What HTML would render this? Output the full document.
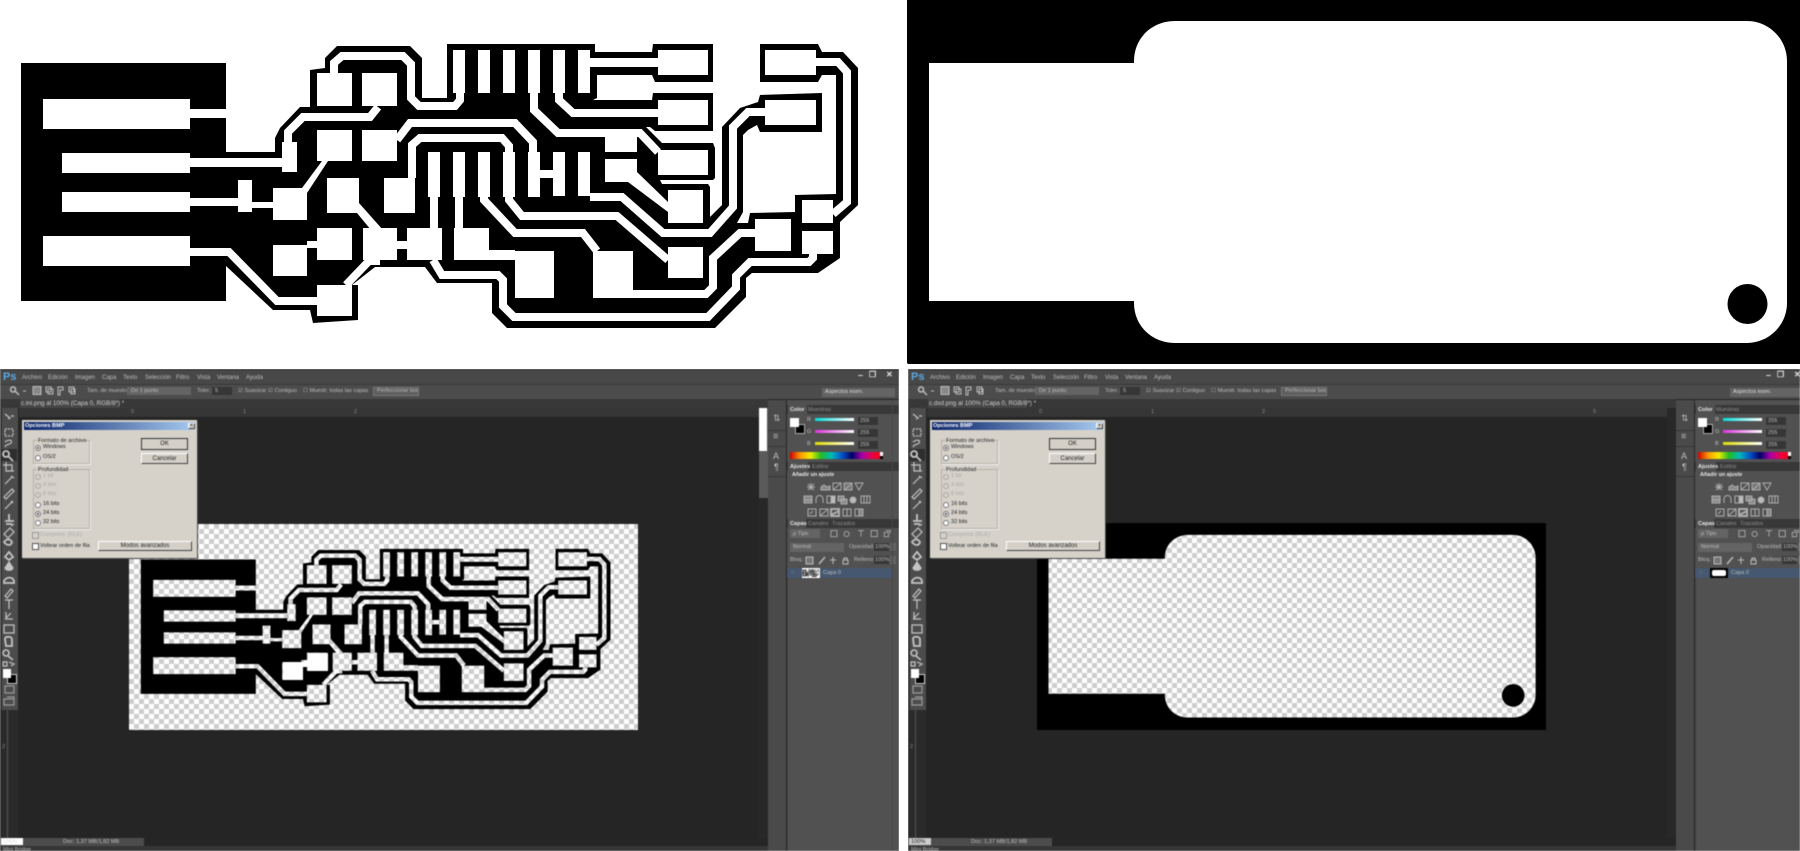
<!DOCTYPE html>
<html><head><meta charset="utf-8"><title>PCB</title>
<style>
html,body{margin:0;padding:0;background:#fff;width:1800px;height:851px;overflow:hidden}
body{position:relative;font-family:"Liberation Sans",sans-serif}
svg{display:block}
.p{position:absolute;top:0;height:851px;overflow:hidden;filter:blur(.6px);clip-path:inset(369px 0 0 0)}
.p div,.p span,.p svg{position:absolute}
.t{font-size:5.6px;line-height:8px;color:#bdbdbd;white-space:nowrap}
.m{font-size:6px}
.d{color:#222;font-size:5.6px}
.g{color:#8f8f8f}
.b{color:#e6e6e6;font-weight:bold}
.bx{background:#363636}
.cmb{background:#646464;height:8px}
.rad{width:4px;height:4px;border-radius:50%;background:#fff;border:1px solid #777;box-sizing:content-box}
.rad.on{background:#333;box-shadow:inset 0 0 0 1px #fff}
.rad.off{background:#d4d0c8;border-color:#aaa}
.chk{width:5px;height:5px;background:#fff;border:1px solid #555}
.grp{border:1px solid #b5b1a9;box-shadow:1px 1px 0 #eee}
.btn{background:#d4d0c8;border:1px solid #fff;border-right:1px solid #444;border-bottom:1px solid #444;text-align:center;color:#222;font-size:6px;line-height:10px;box-sizing:border-box}
.chec{background:repeating-conic-gradient(#cdcdcd 0 25%,#fff 0 50%) 0 0/10px 10px;mix-blend-mode:multiply}
.s{height:3px;width:39px}
</style></head><body>

<svg width="0" height="0" style="position:absolute">
<defs>
<symbol id="pcb" viewBox="0 0 907 365" preserveAspectRatio="none">
<rect width="907" height="365" fill="#fff"/>
<polygon fill="#000" points="21,63 226,63 226,152 275,152 275,138 280,128 300,107 310,107 310,70 325,68 325,58 337,46 410,46 422,58 422,98 447,98 447,44 595,44 595,52 652,52 653,44 713,44 713,82 655,82 652,75 597,75 597,98 593,100 652,100 653,93 713,93 713,131 655,131 650,127 646,127 662,143 713,143 715,148 715,178 713,180 660,180 662,184 708,184 710,187 710,217 722,205 722,127 740,108 758,102 760,95 822,93 822,132 760,132 757,125 748,130 743,135 743,212 737,223 748,223 750,213 795,212 795,195 836,194 836,75 822,75 818,82 760,82 760,44 818,44 822,52 843,52 858,68 858,205 840,222 840,258 818,273 752,273 746,278 746,297 715,328 507,328 492,313 492,283 437,283 425,267 375,267 352,285 358,285 358,320 313,323 310,310 273,310 226,266 226,301 21,301"/>
<g fill="#fff">
<rect x="43" y="99" width="147" height="30"/><rect x="62" y="153" width="128" height="20"/><rect x="62" y="192" width="128" height="20"/><rect x="43" y="236" width="147" height="30"/>
<rect x="190" y="109" width="36" height="9"/><rect x="190" y="158" width="92" height="9"/><rect x="190" y="198" width="48" height="8"/><rect x="252" y="202" width="21" height="6"/><rect x="238" y="180" width="14" height="32"/>
<rect x="282" y="142" width="15" height="30"/>
<rect x="317" y="73" width="35" height="33"/><rect x="362" y="73" width="35" height="33"/><rect x="317" y="130" width="35" height="31"/><rect x="362" y="130" width="35" height="31"/>
<rect x="327" y="178" width="32" height="35"/><rect x="384" y="178" width="31" height="35"/><rect x="273" y="188" width="34" height="32"/><rect x="273" y="245" width="34" height="31"/>
<rect x="317" y="228" width="35" height="32"/><rect x="317" y="285" width="35" height="31"/><rect x="363" y="228" width="34" height="32"/><rect x="407" y="228" width="35" height="32"/><rect x="454" y="228" width="35" height="32"/>
<rect x="515" y="251" width="39" height="47"/><rect x="593" y="251" width="40" height="47"/><rect x="489" y="250" width="26" height="10"/>
<rect x="605" y="137" width="32" height="15"/><rect x="605" y="159" width="32" height="23"/><rect x="668" y="190" width="35" height="33"/><rect x="668" y="247" width="35" height="31"/>
<rect x="658" y="50" width="50" height="25"/><rect x="658" y="100" width="50" height="25"/><rect x="658" y="150" width="50" height="25"/>
<rect x="765" y="50" width="51" height="25"/><rect x="765" y="100" width="51" height="25"/>
<rect x="755" y="219" width="36" height="32"/><rect x="802" y="200" width="31" height="23"/><rect x="802" y="231" width="31" height="23"/>
<rect x="453" y="50" width="12" height="43"/><rect x="478" y="50" width="12" height="43"/><rect x="503" y="50" width="12" height="43"/><rect x="528" y="50" width="12" height="43"/><rect x="553" y="50" width="12" height="43"/><rect x="578" y="50" width="12" height="43"/>
<rect x="428" y="152" width="12" height="45"/><rect x="453" y="152" width="12" height="45"/><rect x="478" y="152" width="12" height="45"/><rect x="503" y="152" width="12" height="45"/><rect x="528" y="152" width="12" height="45"/><rect x="553" y="152" width="12" height="44"/><rect x="578" y="152" width="12" height="44"/>
<rect x="540" y="170" width="13" height="8"/><rect x="590" y="58" width="68" height="9"/><rect x="397" y="241" width="10" height="8"/><rect x="307" y="241" width="10" height="7"/>
<polygon points="302,188 322,161 328,161 307,193"/><polygon points="357,213 359,203 383,230 371,230"/><polygon points="637,172 668,202 668,212 628,182"/>
</g>
<g fill="none" stroke="#fff" stroke-width="8">
<path d="M190 252H229L277 301H317"/>
<path d="M334 73V63L342 56H403L411 64V98L419 106H455L460 100V93"/>
<path d="M288 142V132L303 117H370L378 107"/>
<path d="M397 140L410 123H515L533 142V152"/>
<path d="M412 178V145L420 138H502L509 146V152"/>
<path d="M434 197V230M459 197V230"/>
<path d="M484 197V200L515 233H583L597 251"/>
<path d="M509 197V200L522 216H617L668 260"/>
<path d="M590 197H622L663 233H710L733 207V127L748 112H765"/>
<path d="M559 93V100L573 113H658"/>
<path d="M534 93V110L558 133H640L658 152"/>
<path d="M816 62H838L847 72V202L833 214"/>
<path d="M813 254V258L809 262H750L736 276V288L708 317H514L503 306V280L498 275H442L433 260"/>
<path d="M755 233H740L713 258V287L706 294H633"/>
<path d="M346 285L369 261H380"/>
</g>
</symbol>
<symbol id="case" viewBox="0 0 893 365" preserveAspectRatio="none">
<rect width="893" height="365" fill="#000"/>
<path fill="#fff" d="M22 63H227V61C227 38 245 21 268 21H840C862 21 880 39 880 61V303C880 325 862 343 840 343H268C245 343 227 326 227 303V301H22Z"/>
<circle cx="840.500" cy="304" r="20" fill="#000"/>
</symbol>
<symbol id="tools" viewBox="0 0 18 302">
<g fill="none" stroke="#c4c4c4" stroke-width="1.200">
<path d="M5 6l5 4-2 1M11 8h3"/>
<path d="M5 21h8v7H5z" stroke-dasharray="2 1"/>
<path d="M5 34c4-3 8-2 6 1-2 2-5 1-6 4"/>
<path d="M6 43a3 3 0 1 0 .1 0M8 48l5 5" stroke-width="1.800"/>
<path d="M6 54v9h8M3 57h9v6" />
<path d="M5 76l7-7M11 68l3 2"/>
<path d="M4 89l8-8 2 2-8 8z"/>
<path d="M5 101l8-8M11 93l2 2"/>
<path d="M5 113h9M9 106v7M6 116h6" stroke-width="1.800"/>
<path d="M4 126l6-6 4 4-6 6zM11 118l3-2"/>
<path d="M4 134c3-4 6-3 8 0-1 4-5 4-8 0z" stroke-width="1.800"/>
<path d="M5 149l4-5 4 5-4 3z" stroke-width="1.800"/>
<path d="M9 154l4 6c-1 3-7 3-8 0z" fill="#c4c4c4"/>
<path d="M4 173c3-5 9-4 10 0v2H4z" stroke-width="1.800"/>
<path d="M5 188l6-7 2 2-6 7z"/>
<path d="M5 192h8M9 192v9"/>
<path d="M5 211l6-6M6 204v7h7"/>
<path d="M4 217h10v8H4z"/>
<path d="M5 231c0-3 6-3 7 0v7H6z" stroke-width="1.800"/>
<path d="M6 242a3 3 0 1 0 .1 0M8 248l5 4" stroke-width="1.500"/>
<path d="M3 254h4v4H3zM9 254l5 2-3 2"/>
<path d="M5 278h9v7H5z" stroke="#999"/>
<path d="M4 291h10v6H4zM7 289h7v6" stroke="#999"/>
</g>
</symbol>
<symbol id="adj" viewBox="0 0 75 48">
<g fill="none" stroke="#aeaeae" stroke-width="1">
<path d="M8 2v7M4 6h8M5 3l6 6M11 3l-6 6"/><path d="M18 9V6l3-2 3 2 3-1v4z" fill="#888"/><path d="M30 2h8v7h-8zM30 9l8-7"/><path d="M41 2h8v7h-8zM41 9l4-3 4-4" fill="#777"/><path d="M52 2h8l-4 7z"/>
<path d="M1 15h8v7H1zM1 19h8" fill="#888"/><path d="M13 22v-4a3 3 0 0 1 7 0v4"/><path d="M24 15h8v7h-8z"/><path d="M28 15v7h4v-7z" fill="#bbb"/><path d="M35 15h6v5h-6zM38 18h6v5h-6z" fill="#888"/><path d="M47 19a3 3 0 1 0 6 0 3 3 0 1 0-6 0z" fill="#bbb"/><path d="M58 15h9v7h-9zM61 15v7M64 15v7"/>
<path d="M5 28h8v7H5zM7 33l3-3"/><path d="M17 28h8v7h-8zM17 35l8-7"/><path d="M28 28h8v7h-8zM28 34l8-4" stroke-width="2"/><path d="M40 28h8v7h-8zM44 28v7"/><path d="M52 28h8v7h-8z"/><path d="M56 28h4v7h-4z" fill="#888"/>
</g>
</symbol>
<symbol id="opt" viewBox="0 0 80 12">
<g fill="none" stroke="#bbb">
<path d="M13 2a2.500 2.500 0 1 0 .1 0M15 6l4 4" stroke-width="1.500"/><path d="M23 6h3"/>
<rect x="33" y="1.500" width="8" height="8" fill="#888"/><path d="M46 2h5v5h-5zM48 4h5v5h-5z"/><path d="M58 2h5v3h-3v5h-2z"/><path d="M69 2h5v5h-5zM71 4h4v5h-4z"/>
</g>
</symbol>
<symbol id="lay" viewBox="0 0 80 10">
<g fill="none" stroke="#aeaeae">
<path d="M1 1h7v7H1z"/><path d="M16 5a3 3 0 1 0 6 0a3 3 0 1 0-6 0"/><path d="M32 1h7M35.500 1v7"/><path d="M47 1h7v7h-7z"/><path d="M62 3h5v5h-5zM64 1h5v3"/>
</g>
</symbol>
<symbol id="lock" viewBox="0 0 45 10">
<g fill="none" stroke="#bbb">
<path d="M1 2h7v7H1z" fill="#777"/><path d="M14 9l6-7" stroke-width="1.500"/><path d="M28 2v7M25 5h6"/><path d="M38 5h5v4h-5zM39 5V3h3v2"/>
</g>
</symbol>
</defs>
</svg>

<!-- top left -->
<svg style="position:absolute;left:0;top:0" width="907" height="365"><use href="#pcb" width="907" height="365"/></svg>

<!-- top right -->
<div style="position:absolute;left:907px;top:0;width:893px;height:364px;background:#000;border-left:1px solid #888;box-sizing:border-box"></div>
<svg style="position:absolute;left:907px;top:0" width="893" height="363"><use href="#case" width="893" height="365"/></svg>

<!-- bottom left panel -->
<div class="p" style="left:0;width:899px">
<div style="left:0;top:369px;width:899px;height:482px;background:#252525"></div>
<div style="left:0;top:370px;width:899px;height:14px;background:#484848"></div>
<div style="left:0;top:384px;width:899px;height:15px;background:#4c4c4c;border-top:1px solid #393939;box-sizing:border-box"></div>
<span class="t" style="left:3px;top:372px;color:#5aa9e0;font-size:11px;font-weight:bold;line-height:11px">Ps</span>
<span class="t m" style="left:22px;top:374px">Archivo</span><span class="t m" style="left:48px;top:374px">Edición</span><span class="t m" style="left:75px;top:374px">Imagen</span><span class="t m" style="left:102px;top:374px">Capa</span><span class="t m" style="left:123px;top:374px">Texto</span><span class="t m" style="left:145px;top:374px">Selección</span><span class="t m" style="left:176px;top:374px">Filtro</span><span class="t m" style="left:197px;top:374px">Vista</span><span class="t m" style="left:217px;top:374px">Ventana</span><span class="t m" style="left:246px;top:374px">Ayuda</span>
<span class="t b" style="left:858px;top:371px;font-size:9px">–</span><span class="t b" style="left:869px;top:371px;font-size:8px">❐</span><span class="t b" style="left:886px;top:371px;font-size:8px">✕</span>
<svg style="left:0;top:385px" width="80" height="12"><use href="#opt"/></svg>
<span class="t" style="left:87px;top:387px">Tam. de muestra:</span><div class="cmb" style="left:127px;top:387px;width:64px"></div><span class="t" style="left:131px;top:387px">De 1 punto</span>
<span class="t" style="left:197px;top:387px">Toler.:</span><div class="bx" style="left:212px;top:387px;width:20px;height:8px"></div><span class="t" style="left:215px;top:387px">5</span>
<span class="t" style="left:238px;top:387px">☑ Suavizar</span><span class="t" style="left:268px;top:387px">☑ Contiguo</span><span class="t" style="left:303px;top:387px">☐ Muestr. todas las capas</span>
<div style="left:373px;top:387px;width:46px;height:9px;background:#5e5e5e;border:1px solid #777;box-sizing:border-box"></div><span class="t" style="left:377px;top:387px">Perfeccionar bor.</span>
<div class="cmb" style="left:822px;top:388px;width:73px;height:9px"></div><span class="t" style="left:825px;top:388px;color:#ddd">Aspectos esen.</span>

<div style="left:0;top:399px;width:768px;height:9px;background:#383838"></div>
<div style="left:20px;top:399px;width:99px;height:9px;background:#464646"></div>
<span class="t" style="left:21px;top:400px;color:#d0d0d0;font-size:6.300px">c.ini.png al 100% (Capa 0, RGB/8*) *</span>
<div style="left:19px;top:408px;width:740px;height:9px;background:#363636"></div>
<span class="t" style="left:131px;top:408px;color:#888">0</span><span class="t" style="left:243px;top:408px;color:#888">1</span><span class="t" style="left:354px;top:408px;color:#888">2</span>

<div style="left:2px;top:408px;width:16px;height:302px;background:#4c4c4c"></div><div style="left:0;top:408px;width:2px;height:302px;background:#333"></div>
<div style="left:2px;top:449px;width:15px;height:12px;background:#2e2e2e"></div>
<svg style="left:0;top:408px" width="18" height="302"><use href="#tools" width="18" height="302"/></svg>
<div style="left:7px;top:674px;width:8px;height:8px;background:#000;border:1px solid #ccc"></div>
<div style="left:3px;top:669px;width:8px;height:9px;background:#fff"></div>
<div style="left:0;top:710px;width:18px;height:128px;background:#2a2a2a"></div><div style="left:7px;top:710px;width:1px;height:128px;background:#555"></div>
<span class="t" style="left:2px;top:743px;color:#888">2</span>

<div style="left:759px;top:408px;width:9px;height:90px;background:#5a5a5a"></div>
<div style="left:759px;top:408px;width:8px;height:43px;background:#fff"></div>
<div style="left:759px;top:498px;width:9px;height:340px;background:#282828"></div>

<div style="left:129px;top:524px;width:509px;height:206px;overflow:hidden;background:#fff">
<svg style="left:0;top:0" width="509" height="206"><use href="#pcb" width="509" height="206"/></svg>
<div class="chec" style="left:0;top:0;width:509px;height:206px"></div>
<div style="left:154px;top:138px;width:20px;height:18px;background:#fff"></div>
<div style="left:179px;top:129px;width:20px;height:18px;background:#fff"></div>
<div style="left:173px;top:138px;width:7px;height:5px;background:#fff"></div>
</div>

<div style="left:22px;top:420px;width:175px;height:138px;background:#d6d2ca;box-shadow:1px 1px 0 #444"></div>
<div style="left:24px;top:422px;width:171px;height:8px;background:linear-gradient(90deg,#0a246a,#a6caf0)"></div>
<span class="t" style="left:25px;top:422px;color:#fff;font-weight:bold">Opciones BMP</span>
<div class="btn" style="left:188px;top:423px;width:7px;height:6px;font-size:6px;line-height:5px">×</div>
<div class="grp" style="left:33px;top:440px;width:55px;height:22px"></div>
<div style="left:37px;top:438px;width:46px;height:6px;background:#d6d2ca"></div>
<span class="t d" style="left:38px;top:437px">Formato de archivo</span>
<span class="rad on" style="left:35px;top:445px"></span><span class="t d" style="left:43px;top:443px">Windows</span>
<span class="rad" style="left:35px;top:455px"></span><span class="t d" style="left:43px;top:453px">OS/2</span>
<div class="grp" style="left:33px;top:469px;width:55px;height:58px"></div>
<div style="left:37px;top:467px;width:30px;height:6px;background:#d6d2ca"></div>
<span class="t d" style="left:38px;top:466px">Profundidad</span>
<span class="rad off" style="left:35px;top:474px"></span><span class="t d" style="left:43px;top:472px;color:#aaa">1 bit</span>
<span class="rad off" style="left:35px;top:483px"></span><span class="t d" style="left:43px;top:481px;color:#aaa">4 bits</span>
<span class="rad off" style="left:35px;top:492px"></span><span class="t d" style="left:43px;top:490px;color:#aaa">8 bits</span>
<span class="rad" style="left:35px;top:502px"></span><span class="t d" style="left:43px;top:500px">16 bits</span>
<span class="rad on" style="left:35px;top:511px"></span><span class="t d" style="left:43px;top:509px">24 bits</span>
<span class="rad" style="left:35px;top:520px"></span><span class="t d" style="left:43px;top:518px">32 bits</span>
<span class="chk" style="left:32px;top:532px;background:#d6d2ca;border-color:#999"></span><span class="t d" style="left:40px;top:531px;color:#aaa">Comprimir (RLE)</span>
<span class="chk" style="left:32px;top:543px"></span><span class="t d" style="left:40px;top:542px">Voltear orden de fila</span>
<div class="btn" style="left:141px;top:438px;width:47px;height:12px;border:1px solid #333">OK</div>
<div class="btn" style="left:141px;top:453px;width:47px;height:11px">Cancelar</div>
<div class="btn" style="left:98px;top:541px;width:94px;height:10px;line-height:8px">Modos avanzados</div>

<div style="left:0;top:838px;width:144px;height:8px;background:#4c4c4c"></div>
<div style="left:1px;top:838px;width:22px;height:7px;background:#fff"></div>
<span class="t" style="left:3px;top:838px;color:#ddd">100%</span>
<span class="t" style="left:63px;top:838px">Doc: 1,37 MB/1,82 MB</span>
<div style="left:0;top:846px;width:768px;height:5px;background:#363636"></div>
<span class="t" style="left:3px;top:846px">Mini Bridge</span>

<div style="left:768px;top:400px;width:18px;height:451px;background:#4a4a4a"></div>
<div style="left:787px;top:400px;width:112px;height:451px;background:#515151"></div>
<div style="left:768px;top:430px;width:18px;height:1px;background:#383838"></div><div style="left:768px;top:446px;width:18px;height:1px;background:#383838"></div><div style="left:768px;top:476px;width:18px;height:1px;background:#383838"></div>
<span class="t" style="left:773px;top:414px;font-size:9px">⇅</span><span class="t" style="left:773px;top:432px;font-size:9px">≡</span><span class="t" style="left:773px;top:452px;font-size:9px">A</span><span class="t" style="left:774px;top:463px;font-size:9px">¶</span>

<div style="left:787px;top:405px;width:112px;height:9px;background:#383838"></div>
<div style="left:788px;top:405px;width:19px;height:9px;background:#515151"></div>
<span class="t b" style="left:790px;top:406px">Color</span><span class="t g" style="left:808px;top:406px">Muestras</span>
<div style="left:795px;top:424px;width:8px;height:8px;background:#000;border:1px solid #aaa"></div>
<div style="left:790px;top:418px;width:9px;height:9px;background:#fff"></div>
<span class="t" style="left:807px;top:416px">R</span><span class="t" style="left:807px;top:428px">G</span><span class="t" style="left:807px;top:440px">B</span>
<div class="s" style="left:815px;top:418px;background:linear-gradient(90deg,#0dd,#fff)"></div>
<div class="s" style="left:815px;top:430px;background:linear-gradient(90deg,#d3d,#fff)"></div>
<div class="s" style="left:815px;top:442px;background:linear-gradient(90deg,#dd0,#fff)"></div>
<div class="bx" style="left:858px;top:417px;width:20px;height:8px"></div><div class="bx" style="left:858px;top:429px;width:20px;height:8px"></div><div class="bx" style="left:858px;top:441px;width:20px;height:8px"></div>
<span class="t" style="left:860px;top:417px">255</span><span class="t" style="left:860px;top:429px">255</span><span class="t" style="left:860px;top:441px">255</span>
<div style="left:790px;top:452px;width:93px;height:7px;background:linear-gradient(90deg,#c00,#f90,#ee0,#2b2,#0bb,#05c,#006,#a0a,#e04,#e00)"></div>
<div style="left:880px;top:452px;width:3px;height:4px;background:#fff"></div><div style="left:880px;top:456px;width:3px;height:3px;background:#000"></div>
<div style="left:787px;top:462px;width:112px;height:9px;background:#383838"></div>
<div style="left:788px;top:462px;width:20px;height:9px;background:#515151"></div>
<span class="t b" style="left:790px;top:463px">Ajustes</span><span class="t g" style="left:812px;top:463px">Estilos</span>
<span class="t b" style="left:792px;top:471px;font-size:5.400px">Añadir un ajuste</span>
<svg style="left:803px;top:481px" width="75" height="48"><use href="#adj"/></svg>
<div style="left:787px;top:519px;width:112px;height:9px;background:#383838"></div>
<div style="left:788px;top:519px;width:18px;height:9px;background:#515151"></div>
<span class="t b" style="left:790px;top:520px">Capas</span><span class="t g" style="left:808px;top:520px">Canales</span><span class="t g" style="left:832px;top:520px">Trazados</span>
<div class="cmb" style="left:790px;top:529px;width:30px;height:9px"></div><span class="t" style="left:793px;top:530px">ρ Tipo</span>
<svg style="left:830px;top:529px" width="70" height="10"><use href="#lay"/></svg>
<div class="cmb" style="left:790px;top:543px;width:54px;height:9px"></div><span class="t" style="left:793px;top:543px">Normal</span>
<span class="t" style="left:849px;top:543px">Opacidad:</span><div class="bx" style="left:874px;top:543px;width:15px;height:8px"></div><span class="t" style="left:875px;top:543px">100%</span><div class="cmb" style="left:890px;top:543px;width:6px"></div>
<span class="t" style="left:790px;top:556px">Bloq.:</span>
<svg style="left:805px;top:555px" width="45" height="10"><use href="#lock"/></svg>
<span class="t" style="left:854px;top:556px">Relleno:</span><div class="bx" style="left:874px;top:556px;width:15px;height:8px"></div><span class="t" style="left:875px;top:556px">100%</span><div class="cmb" style="left:890px;top:556px;width:6px"></div>
<div style="left:787px;top:568px;width:106px;height:10px;background:#45586f"></div>
<span class="t" style="left:791px;top:569px">◌</span>
<div style="left:802px;top:568px;width:18px;height:10px;overflow:hidden;background:#fff"><svg style="left:0;top:0" width="18" height="10"><use href="#pcb" width="18" height="10"/></svg></div>
<span class="t" style="left:823px;top:569px">Capa 0</span>
<div style="left:787px;top:578px;width:1px;height:273px;background:#444"></div><div style="left:892px;top:400px;width:1px;height:451px;background:#474747"></div>
</div>

<!-- bottom right panel -->
<div class="p" style="left:908px;width:892px">
<div style="left:0;top:369px;width:899px;height:482px;background:#252525"></div>
<div style="left:0;top:370px;width:899px;height:14px;background:#484848"></div>
<div style="left:0;top:384px;width:899px;height:15px;background:#4c4c4c;border-top:1px solid #393939;box-sizing:border-box"></div>
<span class="t" style="left:3px;top:372px;color:#5aa9e0;font-size:11px;font-weight:bold;line-height:11px">Ps</span>
<span class="t m" style="left:22px;top:374px">Archivo</span><span class="t m" style="left:48px;top:374px">Edición</span><span class="t m" style="left:75px;top:374px">Imagen</span><span class="t m" style="left:102px;top:374px">Capa</span><span class="t m" style="left:123px;top:374px">Texto</span><span class="t m" style="left:145px;top:374px">Selección</span><span class="t m" style="left:176px;top:374px">Filtro</span><span class="t m" style="left:197px;top:374px">Vista</span><span class="t m" style="left:217px;top:374px">Ventana</span><span class="t m" style="left:246px;top:374px">Ayuda</span>
<span class="t b" style="left:858px;top:371px;font-size:9px">–</span><span class="t b" style="left:869px;top:371px;font-size:8px">❐</span><span class="t b" style="left:886px;top:371px;font-size:8px">✕</span>
<svg style="left:0;top:385px" width="80" height="12"><use href="#opt"/></svg>
<span class="t" style="left:87px;top:387px">Tam. de muestra:</span><div class="cmb" style="left:127px;top:387px;width:64px"></div><span class="t" style="left:131px;top:387px">De 1 punto</span>
<span class="t" style="left:197px;top:387px">Toler.:</span><div class="bx" style="left:212px;top:387px;width:20px;height:8px"></div><span class="t" style="left:215px;top:387px">5</span>
<span class="t" style="left:238px;top:387px">☑ Suavizar</span><span class="t" style="left:268px;top:387px">☑ Contiguo</span><span class="t" style="left:303px;top:387px">☐ Muestr. todas las capas</span>
<div style="left:373px;top:387px;width:46px;height:9px;background:#5e5e5e;border:1px solid #777;box-sizing:border-box"></div><span class="t" style="left:377px;top:387px">Perfeccionar bor.</span>
<div class="cmb" style="left:822px;top:388px;width:73px;height:9px"></div><span class="t" style="left:825px;top:388px;color:#ddd">Aspectos esen.</span>

<div style="left:0;top:399px;width:768px;height:9px;background:#383838"></div>
<div style="left:20px;top:399px;width:99px;height:9px;background:#464646"></div>
<span class="t" style="left:21px;top:400px;color:#d0d0d0;font-size:6.300px">c.dxd.png al 100% (Capa 0, RGB/8*) *</span>
<div style="left:19px;top:408px;width:740px;height:9px;background:#363636"></div>
<span class="t" style="left:131px;top:408px;color:#888">0</span><span class="t" style="left:243px;top:408px;color:#888">1</span><span class="t" style="left:354px;top:408px;color:#888">2</span><span class="t" style="left:685px;top:408px;color:#888">5</span>

<div style="left:2px;top:408px;width:16px;height:302px;background:#4c4c4c"></div><div style="left:0;top:408px;width:2px;height:302px;background:#333"></div>
<div style="left:2px;top:449px;width:15px;height:12px;background:#2e2e2e"></div>
<svg style="left:0;top:408px" width="18" height="302"><use href="#tools" width="18" height="302"/></svg>
<div style="left:7px;top:674px;width:8px;height:8px;background:#000;border:1px solid #ccc"></div>
<div style="left:3px;top:669px;width:8px;height:9px;background:#fff"></div>
<div style="left:0;top:710px;width:18px;height:128px;background:#2a2a2a"></div><div style="left:7px;top:710px;width:1px;height:128px;background:#555"></div>
<span class="t" style="left:2px;top:743px;color:#888">2</span>

<div style="left:759px;top:408px;width:9px;height:430px;background:#282828"></div>

<div style="left:129px;top:523px;width:509px;height:207px;overflow:hidden;background:#000">
<svg style="left:-1px;top:0" width="507" height="207"><use href="#case" width="507" height="207"/></svg>
<div class="chec" style="left:0;top:0;width:509px;height:207px"></div>
</div>

<div style="left:22px;top:420px;width:175px;height:138px;background:#d6d2ca;box-shadow:1px 1px 0 #444"></div>
<div style="left:24px;top:422px;width:171px;height:8px;background:linear-gradient(90deg,#0a246a,#a6caf0)"></div>
<span class="t" style="left:25px;top:422px;color:#fff;font-weight:bold">Opciones BMP</span>
<div class="btn" style="left:188px;top:423px;width:7px;height:6px;font-size:6px;line-height:5px">×</div>
<div class="grp" style="left:33px;top:440px;width:55px;height:22px"></div>
<div style="left:37px;top:438px;width:46px;height:6px;background:#d6d2ca"></div>
<span class="t d" style="left:38px;top:437px">Formato de archivo</span>
<span class="rad on" style="left:35px;top:445px"></span><span class="t d" style="left:43px;top:443px">Windows</span>
<span class="rad" style="left:35px;top:455px"></span><span class="t d" style="left:43px;top:453px">OS/2</span>
<div class="grp" style="left:33px;top:469px;width:55px;height:58px"></div>
<div style="left:37px;top:467px;width:30px;height:6px;background:#d6d2ca"></div>
<span class="t d" style="left:38px;top:466px">Profundidad</span>
<span class="rad off" style="left:35px;top:474px"></span><span class="t d" style="left:43px;top:472px;color:#aaa">1 bit</span>
<span class="rad off" style="left:35px;top:483px"></span><span class="t d" style="left:43px;top:481px;color:#aaa">4 bits</span>
<span class="rad off" style="left:35px;top:492px"></span><span class="t d" style="left:43px;top:490px;color:#aaa">8 bits</span>
<span class="rad" style="left:35px;top:502px"></span><span class="t d" style="left:43px;top:500px">16 bits</span>
<span class="rad on" style="left:35px;top:511px"></span><span class="t d" style="left:43px;top:509px">24 bits</span>
<span class="rad" style="left:35px;top:520px"></span><span class="t d" style="left:43px;top:518px">32 bits</span>
<span class="chk" style="left:32px;top:532px;background:#d6d2ca;border-color:#999"></span><span class="t d" style="left:40px;top:531px;color:#aaa">Comprimir (RLE)</span>
<span class="chk" style="left:32px;top:543px"></span><span class="t d" style="left:40px;top:542px">Voltear orden de fila</span>
<div class="btn" style="left:141px;top:438px;width:47px;height:12px;border:1px solid #333">OK</div>
<div class="btn" style="left:141px;top:453px;width:47px;height:11px">Cancelar</div>
<div class="btn" style="left:98px;top:541px;width:94px;height:10px;line-height:8px">Modos avanzados</div>

<div style="left:0;top:838px;width:144px;height:8px;background:#4c4c4c"></div>
<div style="left:1px;top:838px;width:22px;height:7px;background:#ccc"></div>
<span class="t" style="left:3px;top:838px;color:#222">100%</span>
<span class="t" style="left:63px;top:838px">Doc: 1,37 MB/1,82 MB</span>
<div style="left:0;top:846px;width:768px;height:5px;background:#363636"></div>
<span class="t" style="left:3px;top:846px">Mini Bridge</span>

<div style="left:768px;top:400px;width:18px;height:451px;background:#4a4a4a"></div>
<div style="left:787px;top:400px;width:112px;height:451px;background:#515151"></div>
<div style="left:768px;top:430px;width:18px;height:1px;background:#383838"></div><div style="left:768px;top:446px;width:18px;height:1px;background:#383838"></div><div style="left:768px;top:476px;width:18px;height:1px;background:#383838"></div>
<span class="t" style="left:773px;top:414px;font-size:9px">⇅</span><span class="t" style="left:773px;top:432px;font-size:9px">≡</span><span class="t" style="left:773px;top:452px;font-size:9px">A</span><span class="t" style="left:774px;top:463px;font-size:9px">¶</span>

<div style="left:787px;top:405px;width:112px;height:9px;background:#383838"></div>
<div style="left:788px;top:405px;width:19px;height:9px;background:#515151"></div>
<span class="t b" style="left:790px;top:406px">Color</span><span class="t g" style="left:808px;top:406px">Muestras</span>
<div style="left:795px;top:424px;width:8px;height:8px;background:#000;border:1px solid #aaa"></div>
<div style="left:790px;top:418px;width:9px;height:9px;background:#fff"></div>
<span class="t" style="left:807px;top:416px">R</span><span class="t" style="left:807px;top:428px">G</span><span class="t" style="left:807px;top:440px">B</span>
<div class="s" style="left:815px;top:418px;background:linear-gradient(90deg,#0dd,#fff)"></div>
<div class="s" style="left:815px;top:430px;background:linear-gradient(90deg,#d3d,#fff)"></div>
<div class="s" style="left:815px;top:442px;background:linear-gradient(90deg,#dd0,#fff)"></div>
<div class="bx" style="left:858px;top:417px;width:20px;height:8px"></div><div class="bx" style="left:858px;top:429px;width:20px;height:8px"></div><div class="bx" style="left:858px;top:441px;width:20px;height:8px"></div>
<span class="t" style="left:860px;top:417px">255</span><span class="t" style="left:860px;top:429px">255</span><span class="t" style="left:860px;top:441px">255</span>
<div style="left:790px;top:452px;width:93px;height:7px;background:linear-gradient(90deg,#c00,#f90,#ee0,#2b2,#0bb,#05c,#006,#a0a,#e04,#e00)"></div>
<div style="left:880px;top:452px;width:3px;height:4px;background:#fff"></div><div style="left:880px;top:456px;width:3px;height:3px;background:#000"></div>
<div style="left:787px;top:462px;width:112px;height:9px;background:#383838"></div>
<div style="left:788px;top:462px;width:20px;height:9px;background:#515151"></div>
<span class="t b" style="left:790px;top:463px">Ajustes</span><span class="t g" style="left:812px;top:463px">Estilos</span>
<span class="t b" style="left:792px;top:471px;font-size:5.400px">Añadir un ajuste</span>
<svg style="left:803px;top:481px" width="75" height="48"><use href="#adj"/></svg>
<div style="left:787px;top:519px;width:112px;height:9px;background:#383838"></div>
<div style="left:788px;top:519px;width:18px;height:9px;background:#515151"></div>
<span class="t b" style="left:790px;top:520px">Capas</span><span class="t g" style="left:808px;top:520px">Canales</span><span class="t g" style="left:832px;top:520px">Trazados</span>
<div class="cmb" style="left:790px;top:529px;width:30px;height:9px"></div><span class="t" style="left:793px;top:530px">ρ Tipo</span>
<svg style="left:830px;top:529px" width="70" height="10"><use href="#lay"/></svg>
<div class="cmb" style="left:790px;top:543px;width:54px;height:9px"></div><span class="t" style="left:793px;top:543px">Normal</span>
<span class="t" style="left:849px;top:543px">Opacidad:</span><div class="bx" style="left:874px;top:543px;width:15px;height:8px"></div><span class="t" style="left:875px;top:543px">100%</span><div class="cmb" style="left:890px;top:543px;width:6px"></div>
<span class="t" style="left:790px;top:556px">Bloq.:</span>
<svg style="left:805px;top:555px" width="45" height="10"><use href="#lock"/></svg>
<span class="t" style="left:854px;top:556px">Relleno:</span><div class="bx" style="left:874px;top:556px;width:15px;height:8px"></div><span class="t" style="left:875px;top:556px">100%</span><div class="cmb" style="left:890px;top:556px;width:6px"></div>
<div style="left:787px;top:568px;width:106px;height:10px;background:#45586f"></div>
<span class="t" style="left:791px;top:569px">◌</span>
<div style="left:802px;top:568px;width:18px;height:10px;background:#000;overflow:hidden"><div style="left:2px;top:2px;width:14px;height:6px;background:#fff;border-radius:2px"></div></div>
<span class="t" style="left:823px;top:569px">Capa 0</span>
<div style="left:787px;top:578px;width:1px;height:273px;background:#444"></div>
</div>
</body></html>
